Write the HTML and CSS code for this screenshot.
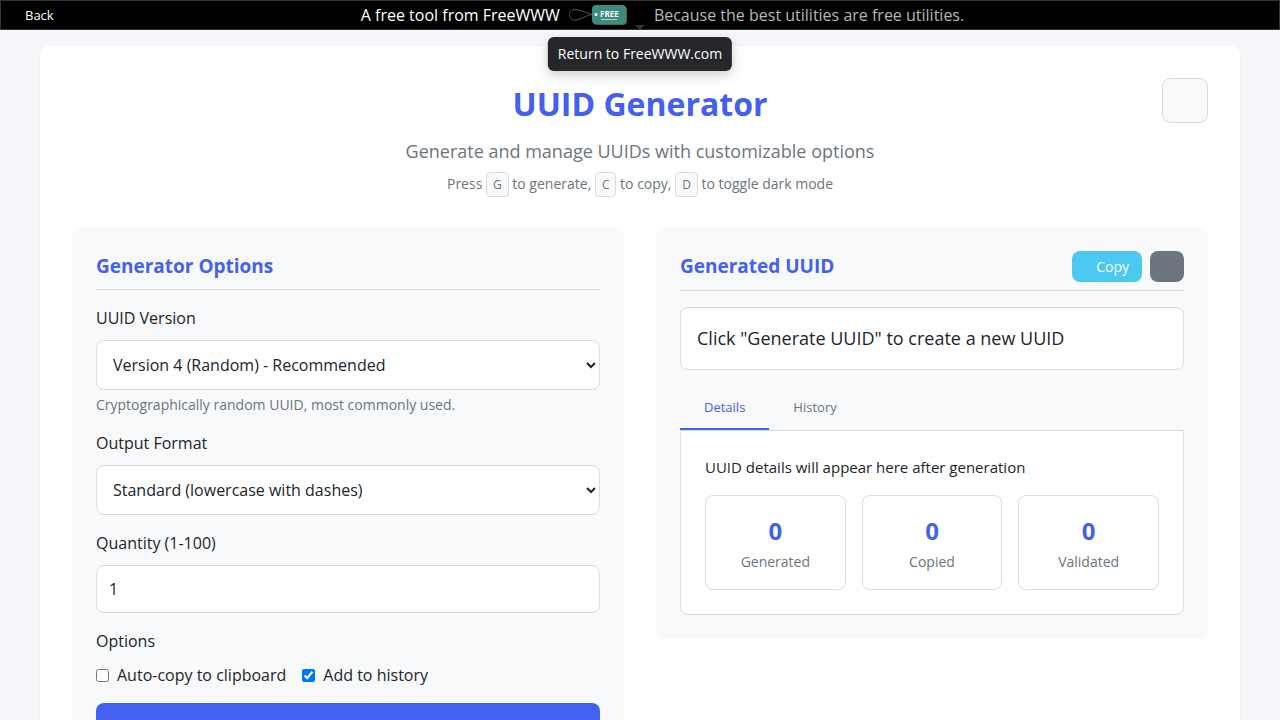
FILE: index.html
```html
<!DOCTYPE html>
<html lang="en">
<head>
    <meta charset="UTF-8">
    <meta name="viewport" content="width=device-width, initial-scale=1.0">
    <title>UUID Generator</title>
    <link rel="stylesheet" href="styles.css">
</head>
<body>
    <nav class="topbar">
        <a class="back-link" href="#">Back</a>
        <div class="topbar-center">
            <span class="topbar-lead">A free tool from FreeWWW</span>
            <a class="logo-link" href="#" aria-label="Return to FreeWWW.com">
                <svg class="logo" width="60" height="24" viewBox="0 0 60 24" aria-hidden="true">
                    <path d="M26 11.500 C19 11.500 15 7 8 6.500 C3 6.500 1.500 9 1.500 11.500 C1.500 15 4 17.500 8 17 C14 16.500 18 11.500 26 11.500" fill="none" stroke="#555" stroke-width="1"/>
                    <rect x="25" y="3" width="34" height="19" rx="4" fill="#555c5b"/>
                    <rect x="24" y="2" width="34" height="19" rx="4" fill="#3b8b7f"/>
                    <circle cx="28" cy="11.500" r="1.500" fill="#fff"/>
                    <text class="logo-text" x="32" y="14">FREE</text>
                    <path d="M33 16.500h16" stroke="#b5d2cd" stroke-width="1"/>
                </svg>
            </a>
            <span class="topbar-slogan">Because the best utilities are free utilities.</span>
        </div>
        <span class="tooltip" role="tooltip">Return to FreeWWW.com</span>
    </nav>

    <main class="container">
        <header class="page-header">
            <h1>UUID Generator</h1>
            <p class="subtitle">Generate and manage UUIDs with customizable options</p>
            <p class="shortcuts">Press <kbd>G</kbd> to generate, <kbd>C</kbd> to copy, <kbd>D</kbd> to toggle dark mode</p>
            <button class="theme-toggle" type="button" aria-label="Toggle dark mode"></button>
        </header>

        <div class="grid">
            <section class="panel">
                <div class="panel-header">
                    <h2>Generator Options</h2>
                </div>

                <div class="form-group">
                    <label for="version">UUID Version</label>
                    <select id="version">
                        <option>Version 4 (Random) - Recommended</option>
                    </select>
                    <p class="hint">Cryptographically random UUID, most commonly used.</p>
                </div>

                <div class="form-group">
                    <label for="format">Output Format</label>
                    <select id="format">
                        <option>Standard (lowercase with dashes)</option>
                    </select>
                </div>

                <div class="form-group">
                    <label for="quantity">Quantity (1-100)</label>
                    <input type="number" id="quantity" min="1" max="100" value="1">
                </div>

                <div class="form-group" role="group" aria-labelledby="options-label">
                    <span class="label" id="options-label">Options</span>
                    <div class="checks">
                        <div class="check">
                            <input type="checkbox" id="auto-copy">
                            <label for="auto-copy">Auto-copy to clipboard</label>
                        </div>
                        <div class="check">
                            <input type="checkbox" id="add-history" checked>
                            <label for="add-history">Add to history</label>
                        </div>
                    </div>
                </div>

                <button class="btn-generate" type="button" aria-label="Generate UUID"></button>
            </section>

            <section class="panel">
                <div class="panel-header">
                    <h2>Generated UUID</h2>
                    <div class="actions">
                        <button class="btn btn-copy" type="button">Copy</button>
                        <button class="btn btn-clear" type="button" aria-label="Clear"></button>
                    </div>
                </div>

                <div class="output">Click "Generate UUID" to create a new UUID</div>

                <div class="tabs" role="tablist">
                    <button class="tab active" type="button" role="tab" aria-selected="true">Details</button>
                    <button class="tab" type="button" role="tab" aria-selected="false">History</button>
                </div>
                <div class="tab-content" role="tabpanel">
                    <p class="details">UUID details will appear here after generation</p>
                    <div class="stats">
                        <div class="stat">
                            <div class="stat-value">0</div>
                            <div class="stat-label">Generated</div>
                        </div>
                        <div class="stat">
                            <div class="stat-value">0</div>
                            <div class="stat-label">Copied</div>
                        </div>
                        <div class="stat">
                            <div class="stat-value">0</div>
                            <div class="stat-label">Validated</div>
                        </div>
                    </div>
                </div>
            </section>
        </div>
    </main>
</body>
</html>
```
FILE: styles.css
```css
:root {
    --primary: #4361ee;
    --info: #4cc9f0;
    --gray: #6c757d;
    --dark: #212529;
    --light: #f8f9fb;
    --border: #dadce0;
    --radius: 8px;
}

* {
    box-sizing: border-box;
    margin: 0;
    padding: 0;
}

body {
    font-family: "Open Sans", sans-serif;
    font-size: 16px;
    line-height: 24px;
    color: var(--dark);
    background-color: #f5f7fb;
}

button, input, select {
    font-family: inherit;
}

/* Top bar */
.topbar {
    position: relative;
    display: flex;
    align-items: center;
    justify-content: center;
    height: 30px;
    background-color: #000;
    border: 1px solid #333;
}
.back-link {
    position: absolute;
    left: 24px;
    font-size: 13px;
    color: #fff;
    text-decoration: none;
}
.topbar-center {
    display: flex;
    align-items: center;
    margin-left: 45px;
}
.topbar-lead {
    color: #fff;
}
.topbar-slogan {
    margin-left: 26px;
    color: #b4b7ba;
}
.logo-link {
    display: flex;
    margin-left: 8px;
}
.logo-text {
    font-family: "Open Sans", sans-serif;
    font-size: 8px;
    font-weight: 700;
    fill: #fff;
}
.tooltip {
    position: absolute;
    top: 36px;
    left: 50%;
    z-index: 10;
    transform: translateX(-50%);
    padding: 6px 10px;
    font-size: 14px;
    line-height: 22px;
    white-space: nowrap;
    color: #fff;
    background-color: #25272a;
    border-radius: 6px;
    box-shadow: 0 4px 12px rgba(0, 0, 0, 0.2);
}
.tooltip::before {
    content: "";
    position: absolute;
    top: -12px;
    left: 50%;
    margin-left: -5px;
    border: 5px solid transparent;
    border-top-color: #333;
    border-bottom: 0;
}

/* Page */
.container {
    max-width: 1200px;
    margin: 16px auto;
    padding: 32px;
    background-color: #fff;
    border-radius: var(--radius);
    box-shadow: 0 4px 6px rgba(0, 0, 0, 0.05);
}
.page-header {
    position: relative;
    margin-bottom: 32px;
    text-align: center;
}
.page-header h1 {
    margin-bottom: 8px;
    font-size: 32px;
    line-height: 51px;
    color: var(--primary);
}
.subtitle {
    margin-bottom: 8px;
    font-size: 18px;
    line-height: 28px;
    color: var(--gray);
}
.shortcuts {
    font-size: 14px;
    line-height: 22px;
    color: var(--gray);
}
kbd {
    padding: 3px 6px;
    font-family: inherit;
    font-size: 12px;
    line-height: 16px;
    background-color: var(--light);
    border: 1px solid var(--border);
    border-radius: 4px;
}
.theme-toggle {
    position: absolute;
    top: 0;
    right: 0;
    width: 46px;
    height: 45px;
    background-color: var(--light);
    border: 1px solid var(--border);
    border-radius: var(--radius);
}

.grid {
    display: grid;
    grid-template-columns: 1fr 1fr;
    gap: 32px;
    align-items: start;
}
.panel {
    padding: 24px;
    background-color: var(--light);
    border-radius: var(--radius);
}
.panel-header {
    display: flex;
    justify-content: space-between;
    align-items: flex-start;
    margin-bottom: 16px;
    padding-bottom: 8px;
    border-bottom: 1px solid var(--border);
}
.panel-header h2 {
    font-size: 19px;
    line-height: 30px;
    color: var(--primary);
}

/* Form */
.form-group {
    margin-bottom: 16px;
}
.form-group > label,
.label {
    display: block;
    margin-bottom: 10px;
}
select,
input[type="number"] {
    width: 100%;
    font-size: 16px;
    color: var(--dark);
    background-color: #fff;
    border: 1px solid var(--border);
    border-radius: var(--radius);
}
select {
    height: 50px;
    padding: 12px;
}
input[type="number"] {
    height: 48px;
    padding: 12px;
}
.hint {
    margin-top: 4px;
    font-size: 14px;
    line-height: 21px;
    color: var(--gray);
}
.checks {
    display: flex;
    flex-wrap: wrap;
    gap: 16px;
}
.check {
    display: flex;
    align-items: center;
    gap: 8px;
}
.check input {
    width: 13px;
    height: 13px;
}
.btn-generate {
    width: 100%;
    height: 48px;
    background-color: var(--primary);
    border: none;
    border-radius: var(--radius);
}

/* Result */
.actions {
    display: flex;
    gap: 8px;
}
.btn {
    height: 31px;
    font-size: 14px;
    color: #fff;
    border: none;
    border-radius: var(--radius);
}
.btn-copy {
    padding: 0 13px 0 24px;
    background-color: var(--info);
}
.btn-clear {
    width: 34px;
    background-color: var(--gray);
}
.output {
    margin-bottom: 16px;
    padding: 16px;
    font-size: 18px;
    line-height: 29px;
    background-color: #fff;
    border: 1px solid var(--border);
    border-radius: var(--radius);
}
.tabs {
    display: flex;
}
.tab {
    padding: 12px 24px;
    font-size: 13px;
    color: var(--gray);
    background: none;
    border: none;
    border-bottom: 2px solid transparent;
}
.tab.active {
    color: var(--primary);
    border-bottom-color: var(--primary);
}
.tab-content {
    padding: 24px;
    background-color: #fff;
    border: 1px solid var(--border);
    border-radius: 0 0 var(--radius) var(--radius);
}
.details {
    margin-bottom: 16px;
    font-size: 15px;
    line-height: 24px;
}
.stats {
    display: grid;
    grid-template-columns: repeat(3, 1fr);
    gap: 16px;
}
.stat {
    padding: 16px;
    text-align: center;
    border: 1px solid var(--border);
    border-radius: var(--radius);
}
.stat-value {
    font-size: 24px;
    line-height: 38px;
    font-weight: 700;
    color: var(--primary);
}
.stat-label {
    font-size: 14px;
    line-height: 23px;
    color: var(--gray);
}
```
